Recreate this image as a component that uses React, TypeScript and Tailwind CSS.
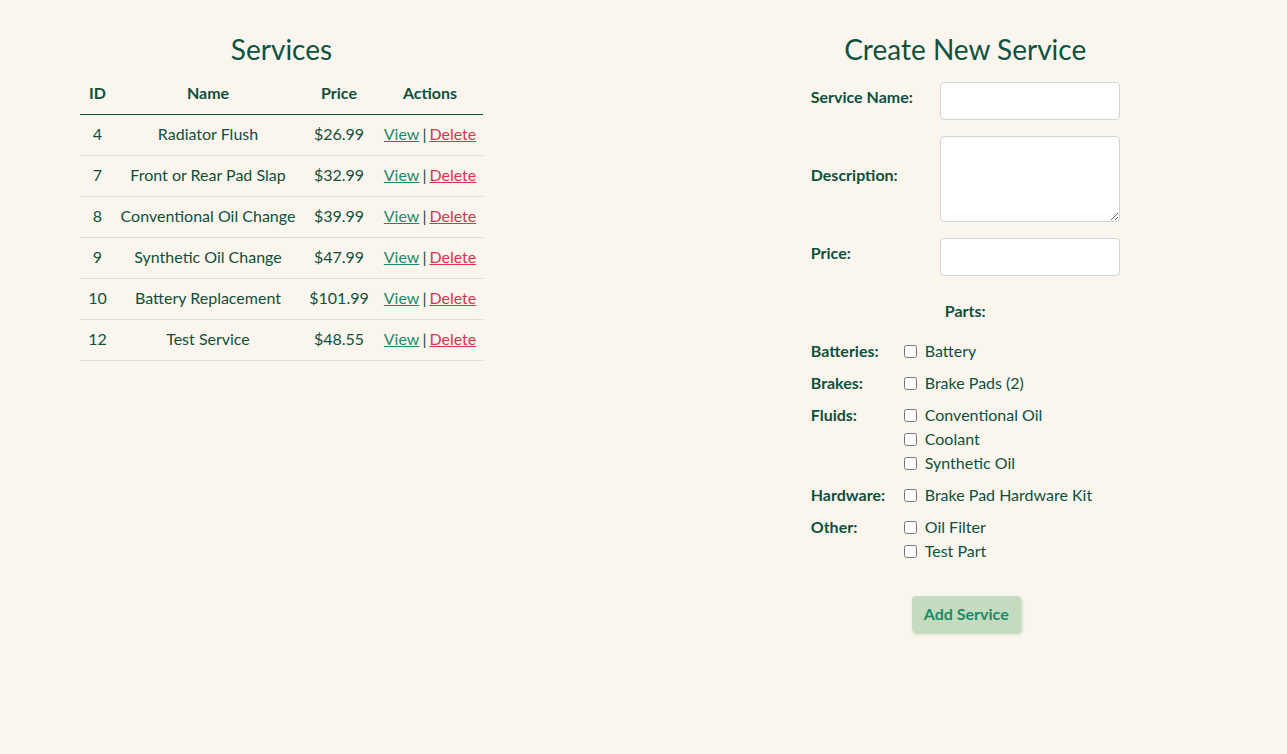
import React from "react";

type Service = { id: number; name: string; price: string };

const services: Service[] = [
  { id: 4, name: "Radiator Flush", price: "$26.99" },
  { id: 7, name: "Front or Rear Pad Slap", price: "$32.99" },
  { id: 8, name: "Conventional Oil Change", price: "$39.99" },
  { id: 9, name: "Synthetic Oil Change", price: "$47.99" },
  { id: 10, name: "Battery Replacement", price: "$101.99" },
  { id: 12, name: "Test Service", price: "$48.55" },
];

const partGroups: { label: string; parts: string[] }[] = [
  { label: "Batteries:", parts: ["Battery"] },
  { label: "Brakes:", parts: ["Brake Pads (2)"] },
  { label: "Fluids:", parts: ["Conventional Oil", "Coolant", "Synthetic Oil"] },
  { label: "Hardware:", parts: ["Brake Pad Hardware Kit"] },
  { label: "Other:", parts: ["Oil Filter", "Test Part"] },
];

export default function App() {
  return (
    <div
      className="min-h-[754px] bg-[#faf6ee] text-[#0f4f3c] grid grid-cols-2"
      style={{ fontFamily: "Lato, 'Open Sans', sans-serif" }}
    >
      {/* services list */}
      <section className="pl-20 pt-[30px]">
        <div className="w-[403px]">
          <h1 className="text-[28px] leading-[38px] text-center text-[#0d5240]">Services</h1>
          <table className="w-full mt-[5px] text-[16px] leading-5 border-collapse">
            <thead>
              <tr className="border-b border-[#0d5240]">
                <th className="w-[35px] h-[41px] pb-[1px] font-bold">ID</th>
                <th className="w-[186px] pb-[1px] font-bold">Name</th>
                <th className="w-[76px] pb-[1px] font-bold">Price</th>
                <th className="pb-[1px] font-bold">Actions</th>
              </tr>
            </thead>
            <tbody>
              {services.map((s) => (
                <tr key={s.id} className="border-b border-[#dcdcd6]">
                  <td className="h-[41px] pb-[2px] text-center">{s.id}</td>
                  <td className="pb-[2px] text-center whitespace-nowrap">{s.name}</td>
                  <td className="pb-[2px] text-center">{s.price}</td>
                  <td className="pb-[2px] text-center whitespace-nowrap">
                    <a href="#" className="underline text-[#1c8a68]">View</a>
                    <span className="mx-[3px]">|</span>
                    <a href="#" className="underline text-[#d9344e]">Delete</a>
                  </td>
                </tr>
              ))}
            </tbody>
          </table>
        </div>
      </section>

      {/* create form */}
      <section className="flex justify-center pt-[30px]">
        <div className="w-[309px]">
          <h1 className="text-[28px] leading-[38px] text-center text-[#0d5240]">Create New Service</h1>
          <form className="mt-[14px] flex flex-col gap-4 text-[16px]">
            <div className="flex items-center">
              <label className="w-[129px] font-bold pb-2">Service Name:</label>
              <input className="w-[180px] h-[38px] bg-white border border-[#cfd4da] rounded" />
            </div>
            <div className="flex items-center">
              <label className="w-[129px] font-bold pb-2">Description:</label>
              <textarea className="w-[180px] h-[86px] bg-white border border-[#cfd4da] rounded" />
            </div>
            <div className="flex items-center">
              <label className="w-[129px] font-bold pb-2">Price:</label>
              <input className="w-[180px] h-[38px] bg-white border border-[#cfd4da] rounded" />
            </div>

            <div className="mt-[7px] text-center font-bold">Parts:</div>

            <div className="flex flex-col gap-2">
              {partGroups.map((g) => (
                <div key={g.label} className="flex">
                  <div className="w-[93px] font-bold leading-6">{g.label}</div>
                  <div className="flex flex-col">
                    {g.parts.map((p) => (
                      <label key={p} className="flex items-center leading-6">
                        <input type="checkbox" className="w-[13px] h-[13px] mr-[8px]" />
                        {p}
                      </label>
                    ))}
                  </div>
                </div>
              ))}
            </div>

            <div className="flex justify-center mt-[17px]">
              <button
                type="button"
                className="ml-[2px] px-3 h-[36px] bg-[#c3dcc0] text-[#1c8a68] font-bold text-[16px] rounded shadow-[1px_2px_3px_rgba(120,180,130,0.5)]"
              >
                Add Service
              </button>
            </div>
          </form>
        </div>
      </section>
    </div>
  );
}
